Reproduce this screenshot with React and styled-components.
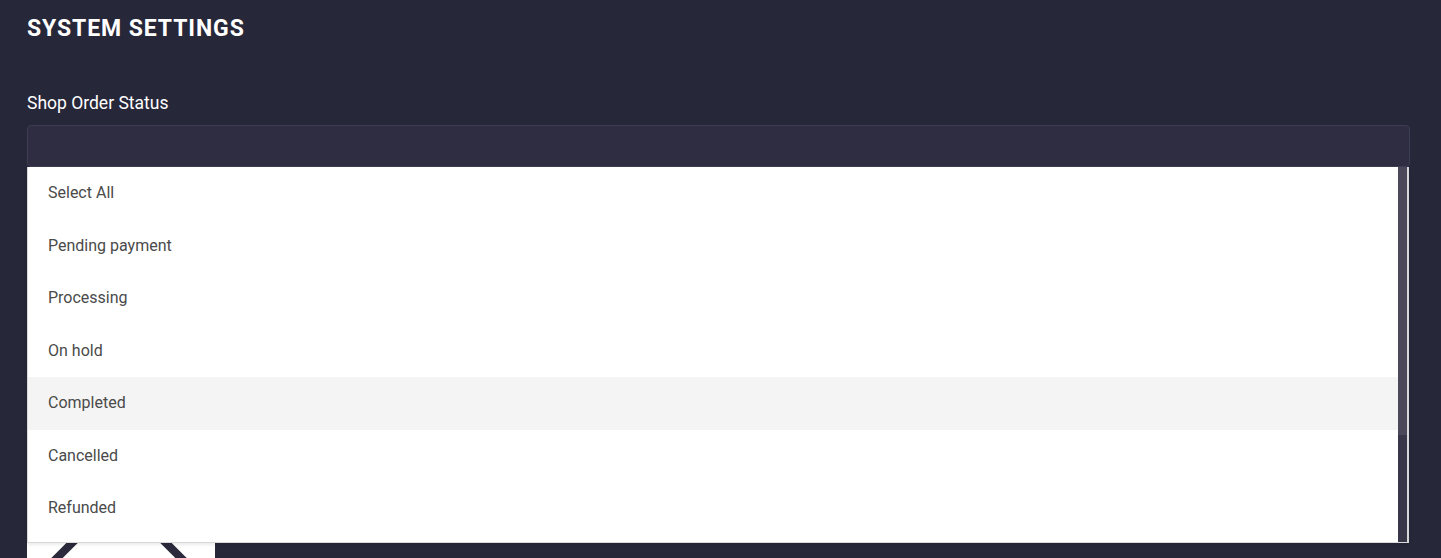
import React from "react";
import styled, { createGlobalStyle } from "styled-components";

const Global = createGlobalStyle`
  html, body { margin: 0; padding: 0; background: #27273a; }
  body { font-family: Roboto, "Noto Sans", sans-serif; overflow: hidden; }
  * { box-sizing: border-box; }
`;

const Page = styled.div`
  padding: 15px 31px 0 27px;
  min-height: 558px;
`;

const Title = styled.h1`
  margin: 0;
  font-size: 23px;
  font-weight: 700;
  letter-spacing: 0.9px;
  color: #ffffff;
  line-height: 28px;
`;

const Field = styled.div`
  margin-top: 50px;
  display: flex;
  flex-direction: column;
`;

const Label = styled.label`
  font-size: 17.5px;
  color: #ffffff;
  line-height: 20px;
  margin-bottom: 12px;
`;

const SelectWrap = styled.div`
  position: relative;
  z-index: 2;
`;

const SelectBox = styled.div`
  height: 42px;
  background: #2e2d42;
  border: 1px solid #3d3c53;
  border-radius: 4px;
`;

const Menu = styled.div`
  position: absolute;
  top: 42px;
  left: 0;
  right: 1px;
  display: flex;
  background: #ffffff;
  border: 1px solid #d8d8d8;
  border-top: none;
  border-right-width: 2px;
  box-shadow: 0 2px 3px rgba(0, 0, 0, 0.08);
  height: 376px;
  overflow: hidden;
`;

const List = styled.ul`
  flex: 1;
  margin: 0;
  padding: 0;
  list-style: none;
`;

const Item = styled.li`
  padding: 15px 20px;
  font-size: 16px;
  line-height: 22.5px;
  color: #4a4a4a;
  background: ${(p) => (p.$active ? "#f4f4f4" : "#ffffff")};
`;

const ScrollTrack = styled.div`
  width: 9px;
  flex: none;
  background: #38374a;
`;

const ScrollThumb = styled.div`
  height: 268px;
  background: #4b4959;
`;

const ImageBox = styled.div`
  margin-top: 303px;
  width: 188px;
  height: 188px;
  background: #ffffff;
  overflow: hidden;
`;

const items = [
  "Select All",
  "Pending payment",
  "Processing",
  "On hold",
  "Completed",
  "Cancelled",
  "Refunded",
];

export default function App() {
  return (
    <>
      <Global />
      <Page>
        <Title>SYSTEM SETTINGS</Title>
        <Field>
          <Label>Shop Order Status</Label>
          <SelectWrap>
            <SelectBox />
            <Menu>
              <List>
                {items.map((t) => (
                  <Item key={t} $active={t === "Completed"}>
                    {t}
                  </Item>
                ))}
              </List>
              <ScrollTrack>
                <ScrollThumb />
              </ScrollTrack>
            </Menu>
          </SelectWrap>
        </Field>
        <ImageBox>
          <svg width="188" height="188" viewBox="0 0 188 188">
            <polyline
              points="-28,146 92,26 212,146"
              fill="none"
              stroke="#2a2a3c"
              strokeWidth="8"
            />
          </svg>
        </ImageBox>
      </Page>
    </>
  );
}
